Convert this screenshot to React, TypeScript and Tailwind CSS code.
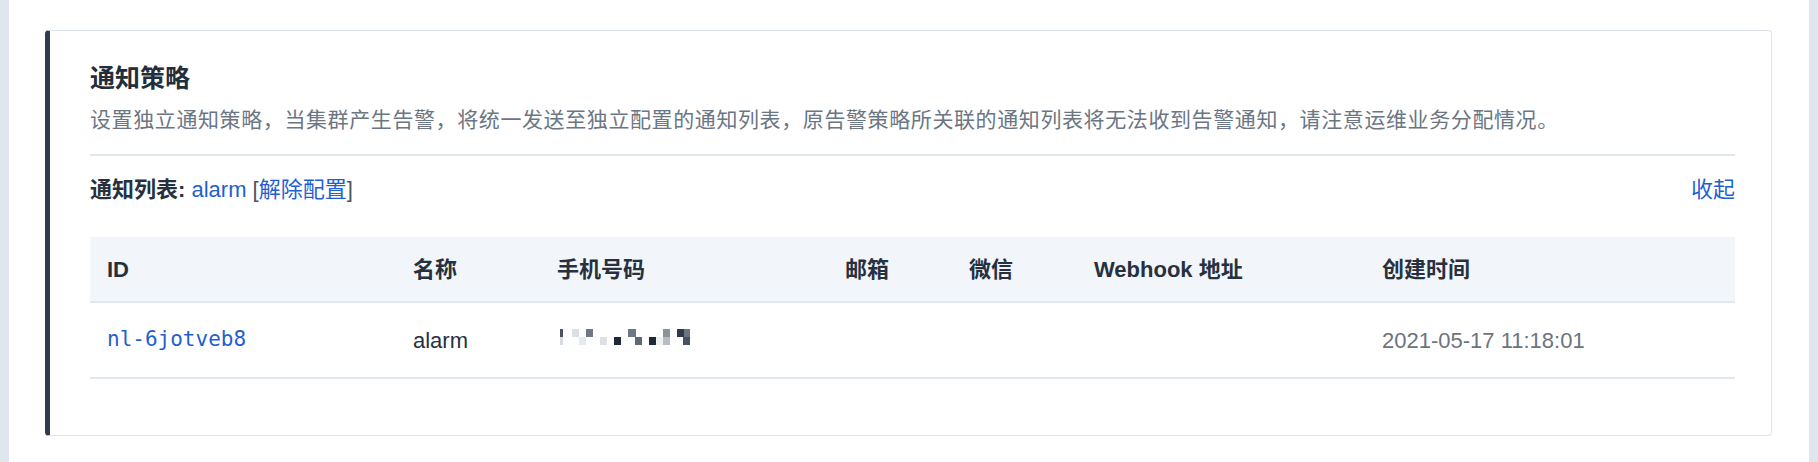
import React from "react";

const FONT = '"Liberation Sans", "Noto Sans CJK SC", sans-serif';

function Pixelated() {
  const r1: [number, number, string][] = [
    [0, 3, "#4a5461"],
    [12, 7, "#dcdfe3"],
    [26, 7, "#6e7785"],
    [68, 8, "#6e7785"],
    [103, 7, "#8a929c"],
    [117, 7, "#2e3a4a"],
    [124, 6, "#697480"],
  ];
  const r2: [number, number, string][] = [
    [0, 3, "#d8dbe0"],
    [19, 7, "#e8eaed"],
    [40, 7, "#dde0e4"],
    [54, 7, "#1f2a38"],
    [75, 7, "#5e6876"],
    [89, 7, "#1f2a38"],
    [96, 7, "#eef0f2"],
    [103, 7, "#b8bdc4"],
    [123, 7, "#475260"],
  ];
  return (
    <svg width="132" height="16" viewBox="0 0 132 16" className="ml-[3px] mb-[6px]">
      {r1.map(([x, w, c], i) => (
        <rect key={"a" + i} x={x} y={0} width={w} height={8} fill={c} />
      ))}
      {r2.map(([x, w, c], i) => (
        <rect key={"b" + i} x={x} y={8} width={w} height={8} fill={c} />
      ))}
    </svg>
  );
}

const cols = "grid grid-cols-[306px_144px_288px_124px_125px_288px_1fr]";

export default function App() {
  return (
    <div className="flex h-[462px] w-full bg-white" style={{ fontFamily: FONT }}>
      <div className="w-[9px] bg-[#dfe6ee]" />
      <div className="flex-1 pl-[36px] pr-[37px] pt-[30px]">
        <div className="rounded-[4px] border border-[#dde4ec] border-l-[5px] border-l-[#2e3c4d] bg-white pl-[40px] pr-[36px] pt-[31px] pb-[56px]">
          <div className="text-[25px] leading-[32px] font-bold text-[#232e3b]">通知策略</div>
          <div className="mt-[11px] text-[21px] leading-[30px] tracking-[0.6px] text-[#6b7684]">
            设置独立通知策略，当集群产生告警，将统一发送至独立配置的通知列表，原告警策略所关联的通知列表将无法收到告警通知，请注意运维业务分配情况。
          </div>
          <div className="mt-[19px] h-[2px] bg-[#e1e7ee]" />
          <div className="mt-[19px] flex items-center justify-between text-[22px] leading-[30px]">
            <div>
              <span className="font-bold text-[#27313e]">通知列表: </span>
              <span className="text-[#1f5fd1]">alarm</span>
              <span className="text-[#4b5563]"> [</span>
              <span className="text-[#1f5fd1]">解除配置</span>
              <span className="text-[#4b5563]">]</span>
            </div>
            <div className="text-[#1f5fd1]">收起</div>
          </div>
          <div className="mt-[32px] text-[22px]">
            <div className={`${cols} h-[66px] items-center bg-[#f2f5f9] border-b-2 border-[#e1e7ee] font-semibold text-[#27313e]`}>
              <div className="pl-[17px]">ID</div>
              <div className="pl-[17px]">名称</div>
              <div className="pl-[17px]">手机号码</div>
              <div className="pl-[17px]">邮箱</div>
              <div className="pl-[17px]">微信</div>
              <div className="pl-[17px]">Webhook 地址</div>
              <div className="pl-[17px]">创建时间</div>
            </div>
            <div className={`${cols} h-[76px] items-center border-b-2 border-[#e1e7ee] text-[#27313e]`}>
              <div className="pl-[17px] text-[21px] text-[#1f5fd1]" style={{ fontFamily: '"DejaVu Sans Mono", monospace' }}>
                nl-6jotveb8
              </div>
              <div className="pl-[17px]">alarm</div>
              <div className="pl-[17px] flex items-center">
                <Pixelated />
              </div>
              <div className="pl-[17px]"></div>
              <div className="pl-[17px]"></div>
              <div className="pl-[17px]"></div>
              <div className="pl-[17px] text-[#6b7480]">2021-05-17 11:18:01</div>
            </div>
          </div>
        </div>
      </div>
      <div className="w-[9px] bg-[#dfe6ee]" />
    </div>
  );
}
